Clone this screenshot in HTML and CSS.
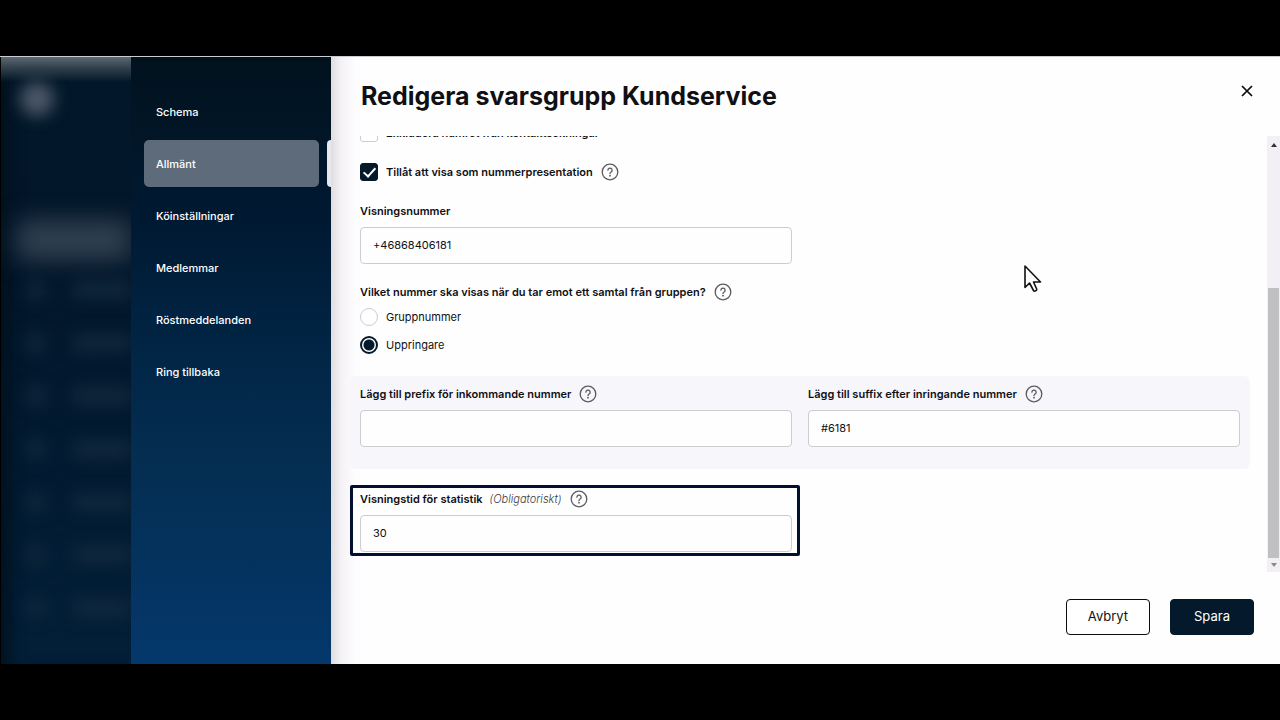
FILE: index.html
```html
<!DOCTYPE html>
<html lang="sv">
<head>
    <meta charset="UTF-8">
    <meta name="viewport" content="width=device-width, initial-scale=1.0">
    <title>Redigera svarsgrupp</title>
    <link rel="stylesheet" href="styles.css">
</head>
<body>

<svg class="sprite" aria-hidden="true">
    <symbol id="help" viewBox="0 0 18 18">
        <circle cx="9" cy="9" r="7.8" fill="none" stroke="#5c5c60" stroke-width="1.3"/>
        <path d="M6.9 7.2a2.1 2.1 0 1 1 3.2 1.8c-.8.5-1.1.9-1.1 1.6" fill="none" stroke="#5c5c60" stroke-width="1.3" stroke-linecap="round"/>
        <circle cx="9" cy="12.7" r=".9" fill="#5c5c60"/>
    </symbol>
</svg>

<div class="app">
    <div class="backdrop" aria-hidden="true">
        <div class="backdrop-top"></div>
        <div class="backdrop-avatar"></div>
        <div class="backdrop-active"></div>
        <div class="backdrop-row"></div>
        <div class="backdrop-row"></div>
        <div class="backdrop-row"></div>
        <div class="backdrop-row"></div>
        <div class="backdrop-row"></div>
        <div class="backdrop-row"></div>
        <div class="backdrop-row"></div>
    </div>

    <nav class="menu">
        <a class="menu-item" href="#">Schema</a>
        <a class="menu-item active" href="#">Allmänt</a>
        <a class="menu-item" href="#">Köinställningar</a>
        <a class="menu-item" href="#">Medlemmar</a>
        <a class="menu-item" href="#">Röstmeddelanden</a>
        <a class="menu-item" href="#">Ring tillbaka</a>
    </nav>

    <main class="dialog">
        <header class="dialog-header">
            <h1>Redigera svarsgrupp Kundservice</h1>
            <button class="close" type="button" aria-label="Stäng">
                <svg width="12" height="12" viewBox="0 0 12 12"><path d="M1 1l10 10M11 1L1 11" stroke="#0a0a0a" stroke-width="1.7"/></svg>
            </button>
        </header>

        <div class="scroll-area">
            <form class="form" id="group-form">
                <div class="row check-row">
                    <input type="checkbox" id="exclude">
                    <label class="label" for="exclude">Exkludera numret från kontaktsökningar</label>
                </div>
                <div class="row check-row">
                    <input type="checkbox" id="present" checked>
                    <label class="label" for="present">Tillåt att visa som nummerpresentation</label>
                    <svg class="help"><use href="#help"/></svg>
                </div>

                <div class="field half">
                    <div class="row"><label class="label" for="number">Visningsnummer</label></div>
                    <input class="text" type="text" id="number" value="+46868406181">
                </div>

                <fieldset class="choices">
                    <legend class="row">
                        <span class="label">Vilket nummer ska visas när du tar emot ett samtal från gruppen?</span>
                        <svg class="help"><use href="#help"/></svg>
                    </legend>
                    <div class="row option">
                        <input type="radio" name="show" id="show-group">
                        <label for="show-group">Gruppnummer</label>
                    </div>
                    <div class="row option">
                        <input type="radio" name="show" id="show-caller" checked>
                        <label for="show-caller">Uppringare</label>
                    </div>
                </fieldset>

                <div class="panel">
                    <div class="field">
                        <div class="row">
                            <label class="label" for="prefix">Lägg till prefix för inkommande nummer</label>
                            <svg class="help"><use href="#help"/></svg>
                        </div>
                        <input class="text" type="text" id="prefix">
                    </div>
                    <div class="field">
                        <div class="row">
                            <label class="label" for="suffix">Lägg till suffix efter inringande nummer</label>
                            <svg class="help"><use href="#help"/></svg>
                        </div>
                        <input class="text" type="text" id="suffix" value="#6181">
                    </div>
                </div>

                <div class="field half marked">
                    <div class="row">
                        <label class="label" for="stat-time">Visningstid för statistik <em>(Obligatoriskt)</em></label>
                        <svg class="help"><use href="#help"/></svg>
                    </div>
                    <input class="text" type="text" id="stat-time" value="30">
                </div>
            </form>

            <div class="scrollbar" aria-hidden="true">
                <div class="arrow up"></div>
                <div class="thumb"></div>
                <div class="arrow down"></div>
            </div>
        </div>

        <footer class="dialog-footer">
            <button class="btn" type="button">Avbryt</button>
            <button class="btn primary" type="submit" form="group-form">Spara</button>
        </footer>

        <svg class="pointer" width="20" height="30" viewBox="0 0 20 30" aria-hidden="true">
            <path d="M2 2v21.500l4.500-4.500 4 7.500c.8 1.300 3.800 0 3.200-1.500L10.500 18H17.500z" fill="#fff" stroke="#111" stroke-width="1.6" stroke-linejoin="round"/>
        </svg>
    </main>
</div>

</body>
</html>
```

FILE: styles.css
```css
:root {
    --navy: #041a2c;
    --text: #101014;
    --border: #cdcdd1;
}

* { box-sizing: border-box; }

body {
    margin: 0;
    padding: 56px 0;
    height: 100vh;
    background-color: #000;
    color: var(--text);
    font-family: Inter, "Liberation Sans", sans-serif;
    font-size: 11px;
}

input, button { font-family: inherit; color: inherit; margin: 0; }

.sprite { display: none; }

.app {
    display: grid;
    grid-template-columns: 131px 200px 1fr;
    height: 100%;
    border-top: 1px solid #c9ced3;
    background-color: #fff;
}

/* Blurred page behind the dialog */
.backdrop {
    overflow: hidden;
    border-left: 1px solid #000;
    background: linear-gradient(#02182a, #02162a 30%, #021f38);
    box-shadow: inset 16px 0 16px -8px #02111d;
}
.backdrop-top { height: 25px; background: linear-gradient(#5c6974, #34434f 40%, transparent); }
.backdrop-avatar {
    width: 34px;
    height: 34px;
    margin: 0 0 0 19px;
    border-radius: 50%;
    background-color: #4c5869;
    filter: blur(8px);
}
.backdrop-active {
    height: 40px;
    margin: 104px 0 22px 16px;
    background-color: #304050;
    filter: blur(12px);
}
.backdrop-row {
    display: flex;
    height: 16px;
    gap: 28px;
    margin: 0 0 37px 26px;
    filter: blur(8px);
}
.backdrop-row::before { content: ""; width: 18px; background-color: #12293d; }
.backdrop-row::after { content: ""; flex: 1; background-color: #12293d; }

.menu {
    display: flex;
    flex-direction: column;
    gap: 5px;
    padding: 31px 0 0 13px;
    background: linear-gradient(#02121d, #001a33 28%, #012545 48%, #042d50 65%, #04386c);
}
.menu-item {
    display: flex;
    align-items: center;
    position: relative;
    height: 47px;
    margin-right: 12px;
    padding: 0 12px;
    border-radius: 5px;
    color: #fff;
    font-weight: 500;
    text-decoration: none;
}
.menu-item.active { background-color: #5d6b7a; }
.menu-item.active::after {
    content: "";
    position: absolute;
    top: 0;
    right: -12px;
    width: 4px;
    height: 100%;
    border-radius: 4px 0 0 4px;
    background-color: #e9e8ee;
}

.dialog {
    display: flex;
    flex-direction: column;
    position: relative;
    min-width: 0;
    min-height: 0;
    background: linear-gradient(90deg, #dfdde0, #f4f2f5 10px, #fdfcfe 24px, #fefefe 32px);
}
.dialog-header {
    display: flex;
    justify-content: space-between;
    align-items: flex-start;
    height: 79px;
    padding: 22px 27px 0 30px;
}
h1 { margin: 0; font-size: 25px; line-height: 34px; font-weight: 700; }
.close {
    display: flex;
    padding: 6px 0;
    border: none;
    background: none;
    cursor: pointer;
}

.scroll-area { display: flex; flex: 1; min-height: 0; }

/* Scrolled to the bottom: rows above the edge are cut off */
.form {
    display: flex;
    flex: 1;
    flex-direction: column;
    justify-content: flex-end;
    overflow: hidden;
    padding: 0 17px 16px 19px;
}
.form > * { flex-shrink: 0; }

.row { display: flex; align-items: center; height: 18px; }
.label { font-weight: 600; }
.label em { margin-left: 4px; font-weight: 300; color: #3c3c42; }
.help { width: 18px; height: 18px; margin-left: 8px; }

.check-row, .option { gap: 8px; }
.check-row { margin: 0 10px 21px; }
.check-row .help { margin-left: 0; }

input[type="checkbox"], input[type="radio"] {
    appearance: none;
    width: 18px;
    height: 18px;
    border: 1px solid var(--border);
    background-color: #fff;
}
input[type="checkbox"] { display: grid; place-items: center; border-radius: 3px; }
input[type="checkbox"]:checked { border-color: var(--navy); background-color: var(--navy); }
input[type="checkbox"]:checked::after {
    content: "";
    width: 5px;
    height: 10px;
    margin-bottom: 3px;
    border: solid #fff;
    border-width: 0 2px 2px 0;
    transform: rotate(42deg);
}
input[type="radio"] { border-radius: 50%; }
input[type="radio"]:checked {
    border: 2px solid var(--navy);
    background: radial-gradient(circle, var(--navy) 5px, #fff 6px);
}

.field { display: flex; flex-direction: column; gap: 7px; }
.half { width: 50%; padding: 0 8px 0 10px; }
.text {
    width: 100%;
    height: 37px;
    padding: 0 12px 2px;
    border: 1px solid var(--border);
    border-radius: 4px;
    background-color: #fefefe;
    font-size: 11px;
}

.choices {
    margin: 19px 0 22px;
    padding: 0 10px;
    border: none;
}
.choices legend { margin-bottom: 7px; padding: 0; }
.option + .option { margin-top: 10px; }

.panel {
    display: grid;
    grid-template-columns: 1fr 1fr;
    gap: 16px;
    padding: 9px 10px 22px;
    border-radius: 6px;
    background-color: #f7f6fb;
}

.marked {
    margin-top: 16px;
    padding: 2px 5px 1px 7px;
    border: 3px solid #020f30;
    border-radius: 2px;
}

.scrollbar {
    display: flex;
    flex-direction: column;
    align-items: center;
    width: 13px;
    background-color: #f2f0f4;
}
.arrow { display: flex; height: 14px; align-items: center; }
.arrow::before { content: ""; border: 3px solid transparent; }
.up { height: 18px; }
.up::before { border-top: none; border-bottom: 4px solid #333; }
.down::before { border-bottom: none; border-top: 4px solid #8a8a8e; }
.thumb { width: 11px; height: 62%; margin-top: auto; background-color: #c0bfc2; }

.dialog-footer {
    display: flex;
    justify-content: flex-end;
    gap: 20px;
    padding: 27px 26px 29px;
}
.btn {
    width: 84px;
    height: 36px;
    padding: 0 0 2px;
    border: 1px solid #0a0a10;
    border-radius: 4px;
    background-color: #fff;
    font-size: 13px;
    cursor: pointer;
}
.btn.primary { border-color: var(--navy); background-color: var(--navy); color: #fff; }

.pointer { position: absolute; top: 207px; right: 237px; }
```
